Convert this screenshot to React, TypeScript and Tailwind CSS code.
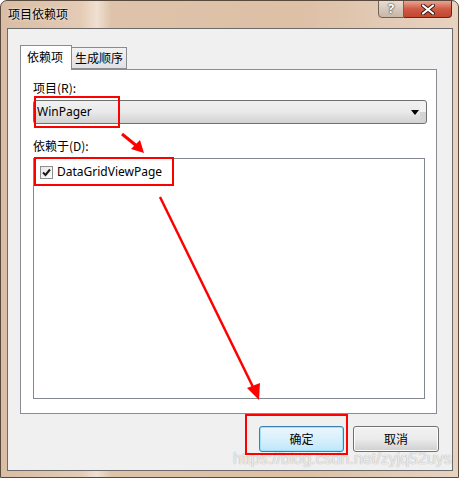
import React from "react";

const cjk = { fontFamily: '"Noto Sans CJK SC", "Noto Sans", sans-serif' };
const ui = { fontFamily: '"Noto Sans", "Noto Sans CJK SC", sans-serif' };

function Arrows() {
  return (
    <svg className="absolute inset-0 pointer-events-none" width="459" height="478" viewBox="0 0 459 478">
      {/* annotation boxes */}
      <rect x="34" y="96" width="84" height="30" fill="none" stroke="#ff0000" strokeWidth="2" />
      <rect x="34" y="157" width="138" height="27" fill="none" stroke="#ff0000" strokeWidth="2" />
      <rect x="245" y="414" width="101" height="39" fill="none" stroke="#ff0000" strokeWidth="2" />
      {/* small arrow */}
      <line x1="121" y1="133" x2="137" y2="146" stroke="#ff0000" strokeWidth="3" />
      <polygon points="143,152 130,148 139,139" fill="#ff0000" />
      {/* long arrow */}
      <line x1="159" y1="196" x2="252" y2="386" stroke="#ff0000" strokeWidth="2.5" />
      <polygon points="258,399 246,387 259,382" fill="#ff0000" />
    </svg>
  );
}

function CheckBox() {
  return (
    <div className="w-[13px] h-[13px] border border-[#8e8f8f] bg-gradient-to-br from-[#e6e6e6] to-white flex items-center justify-center">
      <svg width="9" height="9" viewBox="0 0 9 9">
        <path d="M1 4.5 L3.5 7 L8 1.5" fill="none" stroke="#1a1a1a" strokeWidth="2" />
      </svg>
    </div>
  );
}

export default function App() {
  return (
    <div className="relative w-[459px] h-[478px] overflow-hidden rounded-t-[7px] border border-[#5a4a3e] bg-[linear-gradient(90deg,#d9bda4_0px,#e4cbb5_80px,#efe0d2_96px,#dec3aa_110px,#ddc0a6_300px,#e8d3c1_459px)]">
      {/* title bar */}
      <div className="flex h-[27px] items-start">
        <div className="pl-[7px] pt-[5px] text-[12px] leading-[16px] text-black [text-shadow:0_0_3px_#fff]" style={cjk}>
          项目依赖项
        </div>
        <div className="flex-1" />
        <div className="flex mr-[6px] -mt-px">
          <div className="w-[26px] h-[18px] rounded-bl-[4px] border border-[#6f6259] bg-gradient-to-b from-[#e8ddd3] via-[#d6c8bb] to-[#c9b6a6] flex items-center justify-center text-white font-bold text-[13px] [text-shadow:0_0_1px_#333,0_0_2px_#333]" style={ui}>
            ?
          </div>
          <div className="w-[48px] h-[18px] rounded-br-[4px] border border-l-0 border-[#5d2a22] bg-gradient-to-b from-[#e8a494] via-[#cf5a43] to-[#c3452f] flex items-center justify-center">
            <svg width="14" height="11" viewBox="0 0 14 11">
              <path d="M2 1.5 L12 9.5 M12 1.5 L2 9.5" stroke="#3a1a14" strokeWidth="4" strokeLinecap="round" />
              <path d="M2 1.5 L12 9.5 M12 1.5 L2 9.5" stroke="#ffffff" strokeWidth="2.2" strokeLinecap="round" />
            </svg>
          </div>
        </div>
      </div>

      {/* client area */}
      <div className="ml-[6px] w-[446px] h-[443px] border border-[#6b6b6b] bg-[#f0f0f0] flex flex-col">
        <div className="pl-[12px] pt-[15px]">
          {/* tabs */}
          <div className="flex items-end h-[25px]">
            <div className="relative z-10 -mb-px w-[52px] h-[25px] border border-b-0 border-[#898c95] bg-white text-[12px] leading-[22px] pl-[6px] text-black" style={cjk}>
              依赖项
            </div>
            <div className="w-[55px] h-[22px] border border-l-0 border-[#898c95] bg-gradient-to-b from-[#f2f2f2] to-[#e1e1e1] text-[12px] leading-[20px] pl-[3px] text-black" style={cjk}>
              生成顺序
            </div>
          </div>
          {/* panel */}
          <div className="w-[417px] h-[345px] border border-[#898c95] bg-white pl-[12px]">
            <div className="mt-[10px] h-[16px] text-[12px] leading-[16px] text-black" style={cjk}>
              项目(R):
            </div>
            <div className="mt-[4px] w-[394px] h-[24px] rounded-[3px] border border-[#707070] bg-gradient-to-b from-[#f2f2f2] from-50% to-[#d4d4d4] to-50% flex items-center pl-[3px] pr-[6px]">
              <div className="h-full w-full flex items-center rounded-[2px] bg-gradient-to-b from-[#f1f1f1] via-[#e9e9e9] via-50% to-[#d2d2d2]">
                <span className="text-[12px] text-black" style={ui}>WinPager</span>
                <div className="flex-1" />
                <svg width="8" height="5" viewBox="0 0 8 5" className="mr-[1px]">
                  <polygon points="0,0 8,0 4,5" fill="#000" />
                </svg>
              </div>
            </div>
            <div className="mt-[14px] h-[16px] text-[12px] leading-[16px] text-black" style={cjk}>
              依赖于(D):
            </div>
            <div className="mt-[4px] w-[392px] h-[241px] border border-[#828790] bg-white">
              <div className="flex items-center gap-[4px] pl-[6px] pt-[6px]">
                <CheckBox />
                <span className="text-[12px] leading-[14px] text-black" style={ui}>DataGridViewPage</span>
              </div>
            </div>
          </div>
        </div>
        {/* buttons */}
        <div className="flex justify-end gap-[9px] pr-[13px] mt-[12px]">
          <div className="w-[85px] h-[26px] rounded-[3px] border border-[#3c7fb1] bg-gradient-to-b from-[#eaf6fd] via-[#d9f0fc] via-50% to-[#bee6fd] shadow-[inset_0_0_0_1px_#9fe0fb] flex items-center justify-center text-[12px] text-black" style={cjk}>
            确定
          </div>
          <div className="w-[86px] h-[26px] rounded-[3px] border border-[#707070] bg-gradient-to-b from-[#f2f2f2] via-[#ebebeb] via-50% to-[#cfcfcf] shadow-[inset_0_0_0_1px_#fcfcfc] flex items-center justify-center text-[12px] text-black" style={cjk}>
            取消
          </div>
        </div>
      </div>

      {/* watermark */}
      <div className="absolute left-[232px] top-[449px] text-[16px] leading-[18px] text-white/80 [text-shadow:0_0_1px_#8a8a8a]" style={{ fontFamily: '"Liberation Sans", sans-serif' }}>
        https://blog.csdn.net/zyjq52uys
      </div>

      <Arrows />
    </div>
  );
}
